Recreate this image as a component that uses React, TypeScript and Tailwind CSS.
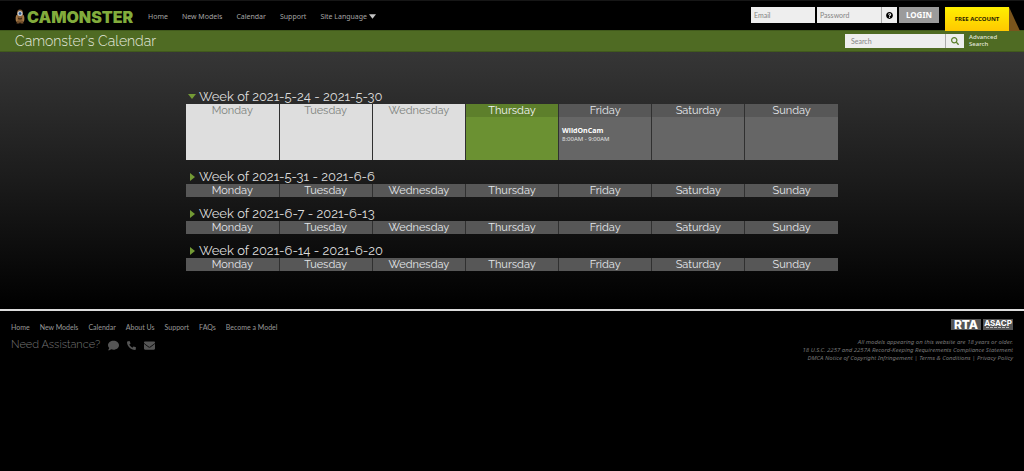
import { useState } from "react";
import { FaComment, FaEnvelope, FaPhone, FaQuestionCircle, FaSearch } from "react-icons/fa";

const days = ["Monday", "Tuesday", "Wednesday", "Thursday", "Friday", "Saturday", "Sunday"];

const weeks = [
  { id: 1, title: "Week of 2021-5-24 - 2021-5-30" },
  { id: 2, title: "Week of 2021-5-31 - 2021-6-6" },
  { id: 3, title: "Week of 2021-6-7 - 2021-6-13" },
  { id: 4, title: "Week of 2021-6-14 - 2021-6-20" },
];

const TODAY = 3;

const headColor = (current: boolean, index: number) => {
  if (current && index < TODAY) return "bg-[#dedede] text-[#7d827d]";
  if (current && index === TODAY) return "bg-[#5d7f2b] text-gray-100";
  return "bg-[#575757] text-gray-200";
};

const bodyColor = (index: number) => {
  if (index < TODAY) return "bg-[#dedede]";
  if (index === TODAY) return "bg-[#6b9132]";
  return "bg-[#666666]";
};

const Logo = () => (
  <a href="#" className="flex w-[118px] items-center gap-[2px]">
    <svg viewBox="0 0 20 30" className="h-[15px] w-[10px] shrink-0">
      <path d="M4 27V8Q4 1 10 1t6 7v19z" fill="#8a6238" />
      <path d="M3 12Q0 16 2 25l3 1V12zM17 12q3 4 1 13l-3 1V12z" fill="#a77b48" />
      <path d="M4 24h5v5H3zM11 24h5l1 5h-6z" fill="#74502c" />
      <circle cx="10" cy="9" r="5" fill="#c3cdd6" />
      <circle cx="10" cy="9" r="2.5" fill="#244e86" />
      <path d="M6 17q4 3 8 0v3q-4 2-8 0z" fill="#4b3119" />
    </svg>
    <span className="font-['Inter'] text-[16px] leading-4 font-black text-[#82ac3c]">CAMONSTER</span>
  </a>
);

const Header = () => (
  <header className="flex h-[30px] justify-between border-t border-[#161616] bg-black pr-[15px] pl-[15px]">
    <div className="flex items-center pt-[2px]">
      <Logo />
      <nav className="ml-[15px] flex items-center gap-[14px] text-[7px] leading-[10px] text-[#a5a5a5]">
        <a href="#">Home</a>
        <a href="#">New Models</a>
        <a href="#">Calendar</a>
        <a href="#">Support</a>
        <button className="flex items-center gap-[2px]">
          Site Language
          <svg viewBox="0 0 8 5" className="h-[5px] w-[7px]">
            <path d="M0 0h8L4 5z" fill="#c4c4c4" />
          </svg>
        </button>
      </nav>
    </div>
    <form className="flex items-start pt-[6px]" onSubmit={(e) => e.preventDefault()}>
      <input
        type="email"
        aria-label="Email"
        placeholder="Email"
        className="mr-[2px] h-4 w-16 bg-[#eeeeee] px-[3px] font-['Lato'] text-[7px] text-gray-700 placeholder:text-[#858585]"
      />
      <input
        type="password"
        aria-label="Password"
        placeholder="Password"
        className="h-4 w-16 bg-[#eeeeee] px-[3px] font-['Lato'] text-[7px] text-gray-700 placeholder:text-[#858585]"
      />
      <button
        type="button"
        aria-label="Forgot password"
        className="flex h-4 w-4 items-center justify-center border-l border-[#aaaaaa] bg-[#eeeeee] text-black"
      >
        <FaQuestionCircle size={7} />
      </button>
      <button className="ml-[2px] h-4 w-10 bg-[#9b9b9b] text-[8px] leading-4 font-bold text-white">LOGIN</button>
      <a
        href="#"
        className="relative z-10 ml-[6px] h-6 w-16 bg-linear-to-b from-[#fff000] to-[#ffc800] text-center text-[6px] leading-6 font-bold text-[#2b2500]"
      >
        FREE ACCOUNT
        <svg viewBox="0 0 11 24" className="absolute top-0 left-full h-6 w-[11px]">
          <path d="M0 0l11 24H0z" fill="#7a541c" />
        </svg>
      </a>
    </form>
  </header>
);

const TitleBar = () => (
  <div className="flex h-[22px] items-center justify-between border-y border-[#415a1c] bg-[#4f6b23] pr-[25px] pl-[15px]">
    <h1 className="font-['Raleway','Open_Sans',sans-serif] text-[14px] leading-5 font-light text-[#e4e8dd]">
      Camonster's Calendar
    </h1>
    <form className="flex items-center" onSubmit={(e) => e.preventDefault()}>
      <input
        type="search"
        aria-label="Search"
        placeholder="Search"
        className="h-[14px] w-[100px] bg-[#eeeeee] px-[6px] font-['Lato'] text-[7px] text-gray-700 placeholder:text-[#858585]"
      />
      <button
        aria-label="Search"
        className="flex h-[14px] w-[19px] items-center justify-center border-l border-[#aaaaaa] bg-[#eeeeee] text-[#5b7f2a]"
      >
        <FaSearch size={8} />
      </button>
      <a href="#" className="ml-[5px] w-[30px] text-[6px] leading-[7px] font-medium text-[#e4e8dd]">
        Advanced Search
      </a>
    </form>
  </div>
);

const Week = ({ title, current }: { title: string; current: boolean }) => {
  const [open, setOpen] = useState<boolean>(current);

  return (
    <section className="mb-[10px]">
      <h2 className="font-['Raleway','Open_Sans',sans-serif] text-[13px] leading-[14px] text-[#dddddd]">
        <button className="flex items-center gap-[3px] pl-[2px]" onClick={() => setOpen(!open)}>
          <svg viewBox="0 0 8 8" className="h-2 w-2">
            <path d={open ? "M0 1h8L4 6z" : "M2 0v8l5-4z"} fill="#739a35" />
          </svg>
          {title}
        </button>
      </h2>
      <table className="w-full table-fixed border-collapse">
        <thead>
          <tr>
            {days.map((day, i) => (
              <th
                key={day}
                className={`h-[13px] border-r border-[#303030] p-0 font-['Raleway','Open_Sans',sans-serif] text-[11px] leading-[13px] font-normal last:border-r-0 ${headColor(current, i)}`}
              >
                {day}
              </th>
            ))}
          </tr>
        </thead>
        {open && (
          <tbody>
            <tr>
              {days.map((day, i) => (
                <td
                  key={day}
                  className={`h-[43px] border-r border-[#303030] px-[3px] pt-[10px] pb-0 align-top last:border-r-0 ${bodyColor(i)}`}
                >
                  {current && day === "Friday" && (
                    <a href="#" className="block text-[6px] leading-[8px] text-[#e2e2e2]">
                      <b className="block font-['Open_Sans'] text-[7px] font-bold text-white">WildOnCam</b>
                      8:00AM - 9:00AM
                    </a>
                  )}
                </td>
              ))}
            </tr>
          </tbody>
        )}
      </table>
    </section>
  );
};

const Footer = () => (
  <footer className="flex items-start justify-between border-t-2 border-[#dcdcdc] bg-black px-[11px] pt-2">
    <div>
      <nav className="flex gap-[10px] pt-[3px] font-['Lato',sans-serif] text-[7px] leading-[10px] text-[#999999]">
        <a href="#">Home</a>
        <a href="#">New Models</a>
        <a href="#">Calendar</a>
        <a href="#">About Us</a>
        <a href="#">Support</a>
        <a href="#">FAQs</a>
        <a href="#">Become a Model</a>
      </nav>
      <div className="mt-[6px] flex items-center gap-2 text-[#555555]">
        <span className="font-['Raleway','Open_Sans',sans-serif] text-[11px] leading-[14px] font-light text-[#777777]">
          Need Assistance?
        </span>
        <a href="#" aria-label="Chat">
          <FaComment size={11} />
        </a>
        <a href="#" aria-label="Phone">
          <FaPhone size={9} className="-scale-x-100" />
        </a>
        <a href="#" aria-label="Email">
          <FaEnvelope size={11} />
        </a>
      </div>
    </div>
    <div className="text-right text-[6px] leading-[8px] text-[#777777] italic">
      <div className="mb-[8px] flex justify-end gap-[2px] font-bold text-white not-italic">
        <a href="#" className="h-[11px] w-[30px] bg-[#555555] text-center font-['Inter'] text-[12px] leading-[11px] font-extrabold">
          RTA
        </a>
        <a href="#" className="h-[11px] w-[30px] bg-[#555555] text-center font-['Inter'] text-[8px] leading-[8px] font-bold">
          ASACP
          <svg viewBox="0 0 24 1" className="mx-auto h-px w-6">
            <path d="M0 .5h24" stroke="#bbbbbb" strokeDasharray="3 1" />
          </svg>
        </a>
      </div>
      <p>All models appearing on this website are 18 years or older.</p>
      <p>18 U.S.C. 2257 and 2257A Record-Keeping Requirements Compliance Statement</p>
      <p>
        <a href="#">DMCA Notice of Copyright Infringement</a> | <a href="#">Terms &amp; Conditions</a> |{" "}
        <a href="#">Privacy Policy</a>
      </p>
    </div>
  </footer>
);

const App = () => {
  return (
    <div className="min-h-screen bg-black font-['Noto_Sans',sans-serif]">
      <Header />
      <TitleBar />
      <main className="bg-linear-to-b/srgb from-[#363636] to-black pt-[38px] pb-7">
        <div className="mx-auto w-full max-w-[652px]">
          {weeks.map((week, i) => (
            <Week key={week.id} title={week.title} current={i === 0} />
          ))}
        </div>
      </main>
      <Footer />
    </div>
  );
};

export default App;
